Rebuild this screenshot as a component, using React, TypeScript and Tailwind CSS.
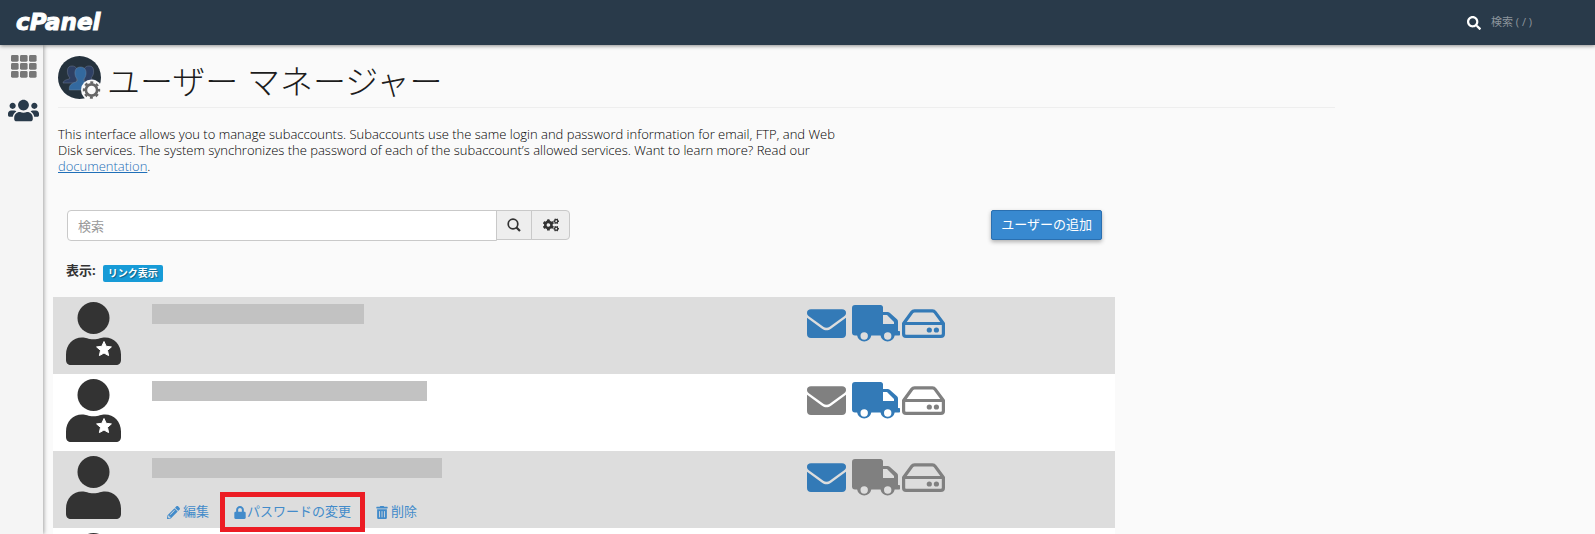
import { FaCogs, FaLock, FaPencilAlt, FaSearch, FaTrashAlt, FaUsers } from "react-icons/fa";

interface Subaccount {
  id: number;
  nameWidth: string;
  starred: boolean;
  email: boolean;
  ftp: boolean;
  disk: boolean;
  actions: boolean;
}

const accounts: Subaccount[] = [
  { id: 1, nameWidth: "w-[212px]", starred: true, email: true, ftp: true, disk: true, actions: false },
  { id: 2, nameWidth: "w-[275px]", starred: true, email: false, ftp: true, disk: false, actions: false },
  { id: 3, nameWidth: "w-[290px]", starred: false, email: true, ftp: false, disk: false, actions: true },
  { id: 4, nameWidth: "w-[275px]", starred: false, email: true, ftp: true, disk: true, actions: false },
];

function GridIcon() {
  const columns = [0, 9, 18];
  const rows = [0, 8, 16];
  return (
    <svg viewBox="0 0 26 23" className="h-[23px] w-[26px] fill-[#777777]" aria-hidden="true">
      {columns.map((x) =>
        rows.map((y) => <rect key={`${x}-${y}`} x={x} y={y} width="7.600" height="6.700" rx="1.400" />),
      )}
    </svg>
  );
}

function ManagerIcon() {
  const bust =
    "M0-13c4 0 6 3 5.500 7-.3 2.600-1.200 4-2.300 5v2c1 1.500 7 1.500 8 6.500v2.500h-22.400v-2.500c1-5 7-5 8-6.500v-2c-1.100-1-2-2.400-2.300-5-.5-4 1.500-7 5.500-7z";
  return (
    <svg viewBox="0 0 43 43" className="h-[43px] w-[43px]" aria-hidden="true">
      <circle cx="21.500" cy="21.500" r="21.500" fill="#25323d" />
      <g fill="#2e4064" stroke="#6d7890" strokeWidth=".5">
        <path d="M14 10c4 0 6 3 5.500 8-.5 4-1 6-1 9H5c1-4 6-3 7-5-2-2-3-5-2.500-8 .3-3 2-4 4.500-4z" />
        <path d="M31 10c-4 0-6 3-5.500 8 .5 4 1 6 1 9H39c-1-4-5-3-6-5 2-2 3-5 2.500-8-.3-3-2-4-4.500-4z" />
      </g>
      <path d={bust} transform="translate(22.500 24)" fill="#33699f" stroke="#7892ab" strokeWidth=".4" />
      <circle cx="33.500" cy="34" r="10.500" fill="#fafafa" />
      <g fill="none" stroke="#666" transform="translate(33.500 34)">
        <circle r="5.600" strokeWidth="2.600" />
        <circle r="7.600" strokeWidth="2.200" strokeDasharray="3 2.970" strokeDashoffset="1.500" />
      </g>
    </svg>
  );
}

function SearchIcon() {
  return (
    <svg viewBox="0 0 14 14" className="h-[14px] w-[14px]" fill="none" stroke="currentColor" aria-hidden="true">
      <circle cx="6" cy="6" r="4.800" strokeWidth="1.700" />
      <path d="M9.500 9.500 13 13" strokeWidth="2.200" />
    </svg>
  );
}

function UserIcon({ starred }: { starred: boolean }) {
  return (
    <svg viewBox="0 0 55 64" className="h-16 w-[55px] shrink-0" aria-hidden="true">
      <g fill="#333">
        <circle cx="27.500" cy="16" r="16" />
        <path d="M16 35.500c4 0 6 1.700 11.500 1.700S35 35.500 39 35.500c9 0 16 7 16 17V58c0 3-2 5-5 5H5c-3 0-5-2-5-5v-5.500c0-10 7-17 16-17z" />
      </g>
      {starred ? (
        <path
          d="m38 39.500 2.200 4.800 5.200.6-3.900 3.500 1.100 5.200-4.600-2.600-4.600 2.600 1.100-5.200-3.900-3.500 5.200-.6z"
          fill="#fff"
          stroke="#fff"
          strokeLinejoin="round"
        />
      ) : null}
    </svg>
  );
}

function serviceColor(enabled: boolean): string {
  return enabled ? "text-[#337ab7]" : "text-[#808080]";
}

function ServiceIcons({ account }: { account: Subaccount }) {
  return (
    <div className="flex h-[38px] items-start">
      <svg
        viewBox="0 0 39 38"
        className={`mr-[6px] h-[38px] w-[39px] ${serviceColor(account.email)}`}
        fill="currentColor"
        role="img"
        aria-label="Email"
      >
        <path d="M4 4.300h31c2.500 0 4 1.500 4 3.500 0 1.800-.8 2.800-2.200 3.800L23 21.400c-2.600 1.800-4.400 1.800-7 0L2.200 11.600C.8 10.600 0 9.600 0 7.800 0 5.800 1.500 4.300 4 4.300z" />
        <path d="M0 12.800 15 23.700c3.300 2.200 5.700 2.200 9 0l15-10.900V29c0 2.500-1.500 4-4 4H4c-2.500 0-4-1.500-4-4z" />
      </svg>
      <svg
        viewBox="0 0 48 38"
        className={`mr-[2px] h-[38px] w-12 ${serviceColor(account.ftp)}`}
        fill="currentColor"
        fillRule="evenodd"
        role="img"
        aria-label="FTP"
      >
        <path d="M3 0h25.500c1.500 0 2.500 1 2.500 2.500V7h4.500c1 0 1.800.4 2.500 1l7 6.300c.7.7 1 1.400 1 2.400V26h1c.7 0 1 .4 1 1v2.500c0 .7-.4 1-1 1h-4.300a7.200 7.200 0 0 1-14.200 0h-9.200a7.200 7.200 0 0 1-14.200 0H3c-2 0-3-1-3-3V3C0 1 1 0 3 0zM31 10v9h11v-2l-7-7zM12.200 27.300a3.700 3.700 0 1 0 0 7.400 3.700 3.700 0 0 0 0-7.400zM35.700 27.300a3.700 3.700 0 1 0 0 7.400 3.700 3.700 0 0 0 0-7.400z" />
      </svg>
      <svg
        viewBox="0 0 43 38"
        className={`h-[38px] w-[43px] ${serviceColor(account.disk)}`}
        fill="none"
        stroke="currentColor"
        strokeWidth="3.200"
        strokeLinejoin="round"
        role="img"
        aria-label="Web Disk"
      >
        <path d="M1.600 18.500 9.800 7.300c.7-1 1.500-1.500 2.700-1.500h18c1.200 0 2 .5 2.700 1.500l8.200 11.200V29c0 1.500-1 2.400-2.500 2.400H4c-1.500 0-2.400-.9-2.400-2.400zM1.600 18.500h39.800" />
        <g fill="currentColor" stroke="none">
          <circle cx="27.300" cy="25" r="2.600" />
          <circle cx="34.400" cy="25" r="2.600" />
        </g>
      </svg>
    </div>
  );
}

function AccountActions() {
  return (
    <div className="flex h-5 items-center gap-[25px] pl-[15px] text-[13px] text-[#428bca]">
      <a href="#edit" className="flex items-center gap-[3px]">
        <FaPencilAlt className="h-[13px] w-[13px]" />
        編集
      </a>
      <a href="#password" className="relative flex items-center gap-px">
        <FaLock className="h-[13px] w-3" />
        パスワードの変更
        <span className="absolute -inset-x-[14px] -inset-y-[10px] z-10 border-[5px] border-[#ec1c24]" />
      </a>
      <a href="#delete" className="flex items-center gap-[3px]">
        <FaTrashAlt className="h-[13px] w-3" />
        削除
      </a>
    </div>
  );
}

function AccountRow({ account }: { account: Subaccount }) {
  return (
    <li className="flex h-[77px] shrink-0 items-start pt-[5px] pl-[13px] odd:bg-[#dddddd] even:bg-white">
      <UserIcon starred={account.starred} />
      <div className="ml-[31px] flex flex-1 flex-col gap-[24px] pt-[2px]">
        <div className={`h-5 bg-[#c2c2c2] ${account.nameWidth}`} />
        {account.actions ? <AccountActions /> : null}
      </div>
      <div className="w-[308px] pt-[3px]">
        <ServiceIcons account={account} />
      </div>
    </li>
  );
}

export default function App() {
  return (
    <div className="flex h-screen flex-col overflow-hidden bg-[#fafafa] font-['Open_Sans','Noto_Sans_CJK_JP',sans-serif] text-[13px] text-[#333333]">
      <header className="z-20 flex h-[45px] shrink-0 items-center justify-between bg-[#293a4a] pr-[24px] pl-4 shadow-[0_1px_4px_rgba(0,0,0,0.45)]">
        <a
          href="#home"
          className="font-['DejaVu_Sans',sans-serif] text-[23px] leading-none font-bold text-white italic [-webkit-text-stroke:1px_white]"
        >
          cPanel
        </a>
        <label className="flex items-center gap-[10px] text-white">
          <FaSearch className="h-[14px] w-[14px]" />
          <input
            type="text"
            aria-label="検索"
            placeholder="検索 ( / )"
            className="w-20 bg-transparent text-[11px] outline-none placeholder:text-[#8d959c]"
          />
        </label>
      </header>

      <div className="flex min-h-0 flex-1">
        <nav className="flex w-[43px] shrink-0 flex-col items-center gap-[17px] bg-[#f5f5f5] pt-[10px] pl-[4px] shadow-[1px_0_4px_rgba(0,0,0,0.35)]">
          <a href="#tools" aria-label="ツール">
            <GridIcon />
          </a>
          <a href="#users" aria-label="ユーザー マネージャー" className="text-[#293a4a]">
            <FaUsers className="h-[31px] w-[31px]" />
          </a>
        </nav>

        <main className="flex max-w-[1292px] flex-1 flex-col pt-[11px] pl-[10px]">
          <div className="ml-[5px] flex h-[52px] shrink-0 items-start gap-[6px] border-b border-[#eeeeee]">
            <ManagerIcon />
            <h1 className="pt-1 text-[33px] leading-[44px] font-light text-[#1c1c1c]">ユーザー マネージャー</h1>
          </div>
          <p className="mt-[18px] ml-[5px] max-w-[800px] shrink-0 leading-4 font-light text-black">
            This interface allows you to manage subaccounts. Subaccounts use the same login and password
            information for email, FTP, and Web Disk services. The system synchronizes the password of each
            of the subaccount’s allowed services. Want to learn more? Read our{" "}
            <a href="#documentation" className="text-[#1f6fb8] underline">
              documentation
            </a>
            .
          </p>

          <section className="mt-9 flex max-w-[1062px] shrink-0 flex-col">
            <div className="flex items-start justify-between pr-[13px] pl-[14px]">
              <form className="flex items-start">
                <input
                  type="text"
                  aria-label="検索"
                  placeholder="検索"
                  className="h-[31px] w-[430px] rounded-l-sm border border-[#c9c9c9] bg-white px-[10px] outline-none placeholder:text-[#999999]"
                />
                <button
                  type="button"
                  aria-label="検索"
                  className="-ml-px flex h-[30px] w-[36px] items-center justify-center border border-[#c9c9c9] bg-[#eeeeee]"
                >
                  <SearchIcon />
                </button>
                <button
                  type="button"
                  aria-label="設定"
                  className="-ml-px flex h-[30px] w-[39px] items-center justify-center rounded-r-sm border border-[#c9c9c9] bg-[#eeeeee]"
                >
                  <FaCogs className="h-4 w-4" />
                </button>
              </form>
              <button
                type="button"
                className="h-[30px] rounded-xs border border-[#2a6fb0] bg-[#3889d0] px-[9px] text-white shadow-[0_2px_4px_rgba(0,0,0,0.3)]"
              >
                ユーザーの追加
              </button>
            </div>

            <div className="mt-[20px] flex h-5 items-center gap-[7px] pl-[13px]">
              <span className="font-bold">表示:</span>
              <span className="mt-1 flex h-[17px] items-center rounded-xs bg-[#179bd7] px-[5px] text-[10px] font-bold text-white [text-shadow:1px_1px_1px_rgba(0,0,0,0.4)]">
                リンク表示
              </span>
            </div>

            <ul className="mt-4 flex flex-col">
              {accounts.map((account) => (
                <AccountRow key={account.id} account={account} />
              ))}
            </ul>
          </section>
        </main>
      </div>
    </div>
  );
}
